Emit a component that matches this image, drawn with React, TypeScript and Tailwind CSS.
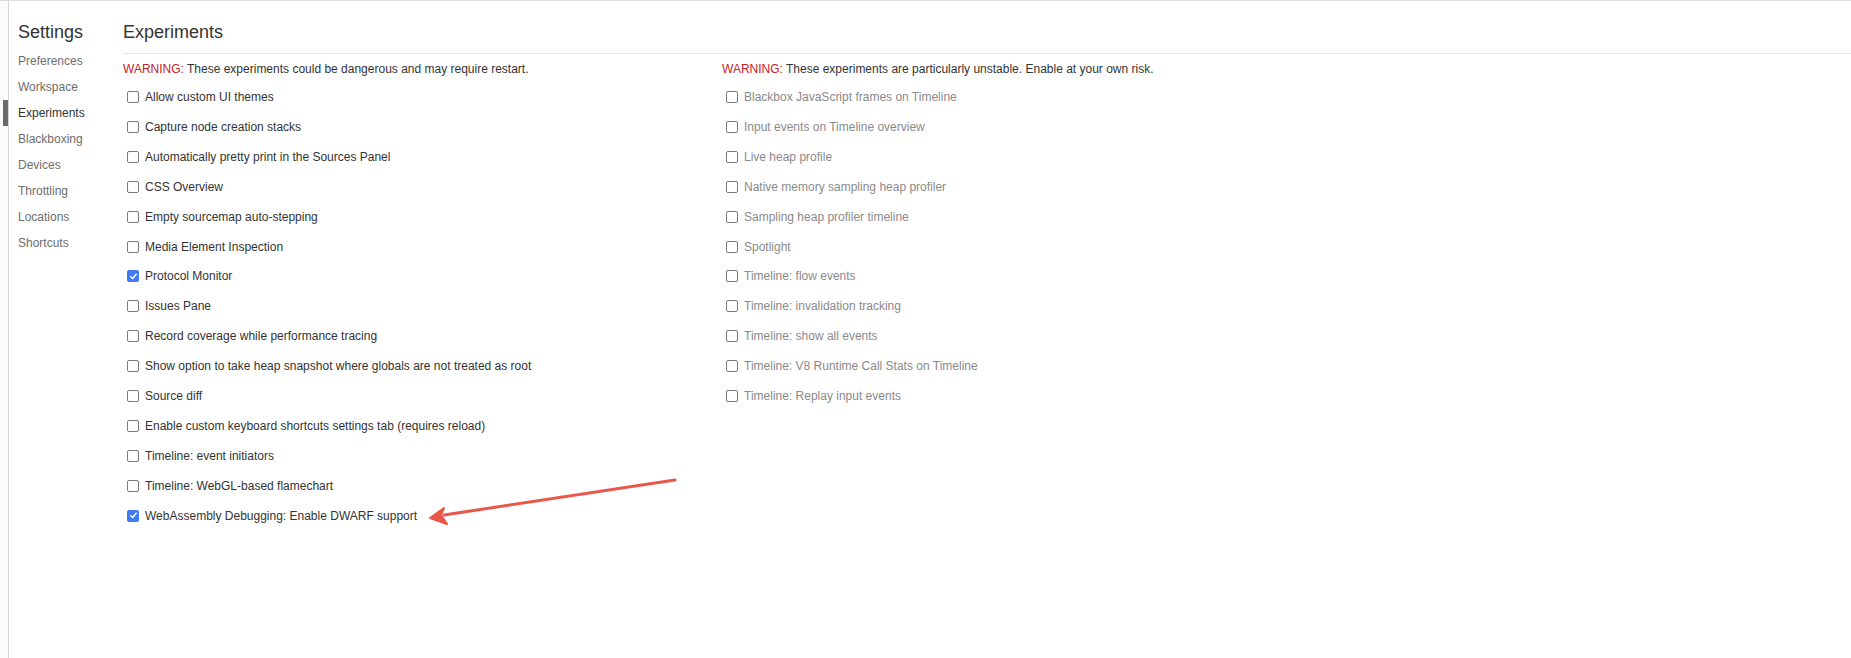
import React from "react";

const stable = [
  { label: "Allow custom UI themes" },
  { label: "Capture node creation stacks" },
  { label: "Automatically pretty print in the Sources Panel" },
  { label: "CSS Overview" },
  { label: "Empty sourcemap auto-stepping" },
  { label: "Media Element Inspection" },
  { label: "Protocol Monitor", checked: true },
  { label: "Issues Pane" },
  { label: "Record coverage while performance tracing" },
  { label: "Show option to take heap snapshot where globals are not treated as root" },
  { label: "Source diff" },
  { label: "Enable custom keyboard shortcuts settings tab (requires reload)" },
  { label: "Timeline: event initiators" },
  { label: "Timeline: WebGL-based flamechart" },
  { label: "WebAssembly Debugging: Enable DWARF support", checked: true },
];

const unstable = [
  "Blackbox JavaScript frames on Timeline",
  "Input events on Timeline overview",
  "Live heap profile",
  "Native memory sampling heap profiler",
  "Sampling heap profiler timeline",
  "Spotlight",
  "Timeline: flow events",
  "Timeline: invalidation tracking",
  "Timeline: show all events",
  "Timeline: V8 Runtime Call Stats on Timeline",
  "Timeline: Replay input events",
];

const tabs = [
  "Preferences",
  "Workspace",
  "Experiments",
  "Blackboxing",
  "Devices",
  "Throttling",
  "Locations",
  "Shortcuts",
];

function Checkbox({ checked }: { checked?: boolean }) {
  if (checked) {
    return (
      <span className="flex h-[12px] w-[12px] shrink-0 items-center justify-center rounded-[2px] bg-[#3f7cf3]">
        <svg width="9" height="9" viewBox="0 0 10 10" fill="none">
          <path d="M2 5.2 L4.1 7.3 L8 2.6" stroke="white" strokeWidth="1.7" strokeLinecap="round" strokeLinejoin="round" />
        </svg>
      </span>
    );
  }
  return <span className="h-[12px] w-[12px] shrink-0 rounded-[2px] border border-[#7a7a7a] bg-white" />;
}

function Row({ label, checked, muted }: { label: string; checked?: boolean; muted?: boolean }) {
  return (
    <div className="flex h-[29.93px] items-center gap-[6px] pl-[4px]">
      <Checkbox checked={checked} />
      <span className={muted ? "text-[#8a8a8a]" : "text-[#333333]"}>{label}</span>
    </div>
  );
}

export default function App() {
  return (
    <div
      className="relative flex h-[658px] w-[1851px] overflow-hidden border-t border-[#dcdcdc] bg-white text-[12px] leading-[16px]"
      style={{ fontFamily: '"Liberation Sans", Arial, Helvetica, sans-serif' }}
    >
      {/* window edge + active tab marker */}
      <div className="flex w-[9px] shrink-0 flex-col border-r border-[#d6d6d6] bg-[#fbfbfb]">
        <div className="h-[99px]" />
        <div className="ml-[3px] h-[26px] w-[5px] bg-[#6b6b6b]" />
      </div>

      {/* sidebar */}
      <div className="w-[114px] shrink-0 pl-[9px] pt-[19px]">
        <div className="h-[24px] text-[18px] leading-[24px] text-[#333333]">Settings</div>
        <div className="mt-[4px] flex flex-col">
          {tabs.map((t) => (
            <div
              key={t}
              className={
                "flex h-[26px] items-center " +
                (t === "Experiments" ? "text-[#333333]" : "text-[#6e6e6e]")
              }
            >
              {t}
            </div>
          ))}
        </div>
      </div>

      {/* content */}
      <div className="flex min-w-0 flex-1 flex-col">
        <div className="h-[53px] border-b border-[#e6e6e6] pt-[19px]">
          <div className="h-[24px] text-[18px] leading-[24px] text-[#333333]">Experiments</div>
        </div>
        <div className="flex">
          <div className="w-[599px] shrink-0">
            <div className="mb-[5px] mt-[7px] h-[16px] text-[#333333]">
              <span className="text-[#c5221f]">WARNING:</span> These experiments could be dangerous and may require restart.
            </div>
            {stable.map((e) => (
              <Row key={e.label} label={e.label} checked={e.checked} />
            ))}
          </div>
          <div className="flex-1">
            <div className="mb-[5px] mt-[7px] h-[16px] text-[#333333]">
              <span className="text-[#c5221f]">WARNING:</span> These experiments are particularly unstable. Enable at your own risk.
            </div>
            {unstable.map((l) => (
              <Row key={l} label={l} muted />
            ))}
          </div>
        </div>
      </div>

      {/* annotation arrow */}
      <svg className="pointer-events-none absolute left-0 top-0" width="1851" height="658">
        <line x1="675" y1="479" x2="444" y2="514" stroke="#e9574b" strokeWidth="3" strokeLinecap="round" />
        <path d="M430 517 L444 507 L441 514 L447 523 Z" fill="#e9574b" stroke="#e9574b" strokeWidth="2" strokeLinejoin="round" />
      </svg>
    </div>
  );
}
